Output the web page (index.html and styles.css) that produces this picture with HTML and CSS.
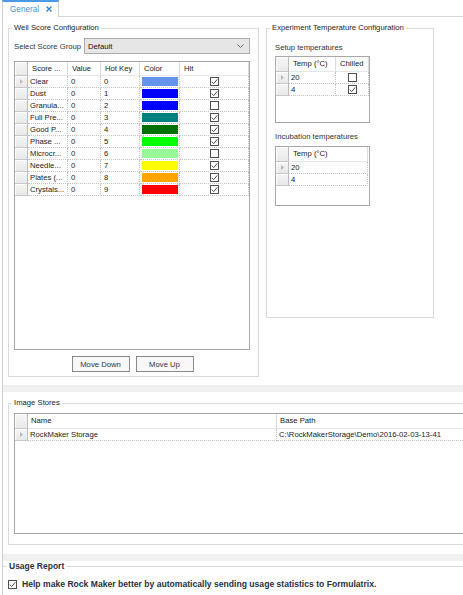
FILE: index.html
```html
<!DOCTYPE html>
<html>
<head>
<meta charset="utf-8">
<link rel="stylesheet" href="styles.css">
</head>
<body>
<div class="tabstrip">
  <div class="tab">
    <span class="tab-label">General</span>
    <svg class="tab-close" viewBox="0 0 6 6"><path d="M0.5 0.5 5.5 5.5 M5.5 0.5 0.5 5.5"/></svg>
  </div>
  <div class="tabfill"></div>
</div>
<div class="panel">
  <div class="top">
    <fieldset class="group well">
      <legend>Well Score Configuration</legend>
      <div class="select-row">
        <span class="select-label">Select Score Group</span>
        <div class="combo"><span>Default</span><svg class="chev" viewBox="0 0 7 4"><path d="M0.5 0.5 3.5 3.5 6.5 0.5"/></svg></div>
      </div>
      <div class="grid score-grid">
        <table>
          <colgroup><col class="c-rh"><col class="c-name"><col class="c-val"><col class="c-key"><col class="c-color"><col></colgroup>
          <thead><tr><th class="corner"></th><th>Score ...</th><th>Value</th><th>Hot Key</th><th>Color</th><th>Hit</th></tr></thead>
          <tbody>
            <tr><td class="rh"><svg class="cur" viewBox="0 0 3 5"><path d="M0 0 3 2.5 0 5z"/></svg></td><td>Clear</td><td>0</td><td>0</td><td><div class="sw" style="background:#6495ed"></div></td><td class="chk"><svg class="cb" viewBox="0 0 9 9"><rect x=".5" y=".5" width="8" height="8"/><path d="M1.8 4.6 3.7 6.6 7.2 2.4"/></svg></td></tr>
            <tr><td class="rh"></td><td>Dust</td><td>0</td><td>1</td><td><div class="sw" style="background:#0000ff"></div></td><td class="chk"><svg class="cb" viewBox="0 0 9 9"><rect x=".5" y=".5" width="8" height="8"/><path d="M1.8 4.6 3.7 6.6 7.2 2.4"/></svg></td></tr>
            <tr><td class="rh"></td><td>Granula...</td><td>0</td><td>2</td><td><div class="sw" style="background:#0000ff"></div></td><td class="chk"><svg class="cb" viewBox="0 0 9 9"><rect x=".5" y=".5" width="8" height="8"/></svg></td></tr>
            <tr><td class="rh"></td><td>Full Pre...</td><td>0</td><td>3</td><td><div class="sw" style="background:#008080"></div></td><td class="chk"><svg class="cb" viewBox="0 0 9 9"><rect x=".5" y=".5" width="8" height="8"/><path d="M1.8 4.6 3.7 6.6 7.2 2.4"/></svg></td></tr>
            <tr><td class="rh"></td><td>Good P...</td><td>0</td><td>4</td><td><div class="sw" style="background:#007000"></div></td><td class="chk"><svg class="cb" viewBox="0 0 9 9"><rect x=".5" y=".5" width="8" height="8"/><path d="M1.8 4.6 3.7 6.6 7.2 2.4"/></svg></td></tr>
            <tr><td class="rh"></td><td>Phase ...</td><td>0</td><td>5</td><td><div class="sw" style="background:#00ff00"></div></td><td class="chk"><svg class="cb" viewBox="0 0 9 9"><rect x=".5" y=".5" width="8" height="8"/><path d="M1.8 4.6 3.7 6.6 7.2 2.4"/></svg></td></tr>
            <tr><td class="rh"></td><td>Microcr...</td><td>0</td><td>6</td><td><div class="sw" style="background:#98fb98"></div></td><td class="chk"><svg class="cb" viewBox="0 0 9 9"><rect x=".5" y=".5" width="8" height="8"/></svg></td></tr>
            <tr><td class="rh"></td><td>Needle...</td><td>0</td><td>7</td><td><div class="sw" style="background:#ffff00"></div></td><td class="chk"><svg class="cb" viewBox="0 0 9 9"><rect x=".5" y=".5" width="8" height="8"/><path d="M1.8 4.6 3.7 6.6 7.2 2.4"/></svg></td></tr>
            <tr><td class="rh"></td><td>Plates (...</td><td>0</td><td>8</td><td><div class="sw" style="background:#ffa500"></div></td><td class="chk"><svg class="cb" viewBox="0 0 9 9"><rect x=".5" y=".5" width="8" height="8"/><path d="M1.8 4.6 3.7 6.6 7.2 2.4"/></svg></td></tr>
            <tr><td class="rh"></td><td>Crystals...</td><td>0</td><td>9</td><td><div class="sw" style="background:#ff0000"></div></td><td class="chk"><svg class="cb" viewBox="0 0 9 9"><rect x=".5" y=".5" width="8" height="8"/><path d="M1.8 4.6 3.7 6.6 7.2 2.4"/></svg></td></tr>
          </tbody>
        </table>
      </div>
      <div class="buttons">
        <button class="btn">Move Down</button>
        <button class="btn">Move Up</button>
      </div>
    </fieldset>

    <fieldset class="group temps">
      <legend>Experiment Temperature Configuration</legend>
      <div class="sub-label first">Setup temperatures</div>
      <div class="grid setup-grid">
        <table>
          <colgroup><col class="c-rh"><col class="c-temp"><col></colgroup>
          <thead><tr><th class="corner"></th><th>Temp (°C)</th><th>Chilled</th></tr></thead>
          <tbody>
            <tr><td class="rh"><svg class="cur" viewBox="0 0 3 5"><path d="M0 0 3 2.5 0 5z"/></svg></td><td>20</td><td class="chk"><svg class="cb" viewBox="0 0 9 9"><rect x=".5" y=".5" width="8" height="8"/></svg></td></tr>
            <tr><td class="rh"></td><td>4</td><td class="chk"><svg class="cb" viewBox="0 0 9 9"><rect x=".5" y=".5" width="8" height="8"/><path d="M1.8 4.6 3.7 6.6 7.2 2.4"/></svg></td></tr>
          </tbody>
        </table>
      </div>
      <div class="sub-label">Incubation temperatures</div>
      <div class="grid incub-grid">
        <table>
          <colgroup><col class="c-rh"><col></colgroup>
          <thead><tr><th class="corner"></th><th>Temp (°C)</th></tr></thead>
          <tbody>
            <tr><td class="rh"><svg class="cur" viewBox="0 0 3 5"><path d="M0 0 3 2.5 0 5z"/></svg></td><td>20</td></tr>
            <tr><td class="rh"></td><td>4</td></tr>
          </tbody>
        </table>
      </div>
    </fieldset>
  </div>

  <div class="band"></div>

  <div class="stores-section">
    <fieldset class="group stores">
      <legend>Image Stores</legend>
      <div class="grid stores-grid">
        <table>
          <colgroup><col class="c-rh"><col class="c-sname"><col></colgroup>
          <thead><tr><th class="corner"></th><th>Name</th><th>Base Path</th></tr></thead>
          <tbody>
            <tr><td class="rh"><svg class="cur" viewBox="0 0 3 5"><path d="M0 0 3 2.5 0 5z"/></svg></td><td>RockMaker Storage</td><td>C:\RockMakerStorage\Demo\2016-02-03-13-41</td></tr>
          </tbody>
        </table>
      </div>
    </fieldset>
  </div>

  <div class="band"></div>

  <fieldset class="usage">
    <legend>Usage Report</legend>
    <div class="check-row">
      <svg class="cb big" viewBox="0 0 9 9"><rect x=".5" y=".5" width="8" height="8"/><path d="M1.8 4.6 3.7 6.6 7.2 2.4"/></svg>
      <span>Help make Rock Maker better by automatically sending usage statistics to Formulatrix.</span>
    </div>
  </fieldset>
</div>
</body>
</html>
```

FILE: styles.css
```css
* { box-sizing: border-box; }
html, body { margin: 0; padding: 0; }
body {
  width: 463px;
  height: 595px;
  overflow: hidden;
  background: #fff;
  padding-left: 2px;
  font-family: "Liberation Sans", Arial, sans-serif;
  font-size: 7.7px;
  color: #262626;
}

/* tab strip */
.tabstrip { display: flex; height: 17px; }
.tab {
  width: 57px;
  height: 17px;
  border-left: 1px solid #cfcfcf;
  border-right: 1px solid #cfcfcf;
  border-top: 2px solid #4a9ae4;
  display: flex;
  align-items: center;
  padding-left: 7px;
  padding-bottom: 1px;
  color: #4a94dc;
  font-size: 8.2px;
}
.tab-label { width: 36px; }
.tab-close { width: 6px; height: 6px; }
.tab-close path { stroke: #2f86d8; stroke-width: 1.4; fill: none; }
.tabfill { flex: 1; border-bottom: 1px solid #d6d6d6; }

.panel { border-left: 1px solid #d0d0d0; height: 578px; }

.top { display: flex; align-items: flex-start; height: 368px; }

/* group boxes */
.group {
  margin: 0;
  border: 1px solid #dadada;
  min-width: 0;
}
.group legend {
  padding: 0 2px;
  height: 10px;
  line-height: 10px;
  color: #1e1e1e;
}

.well {
  margin: 6px 0 0 5px;
  width: 251px;
  padding: 5px 7px 4px 5px;
}
.well legend { margin-left: -2px; }

.select-row { display: flex; align-items: center; height: 16px; }
.select-label { width: 70px; color: #333; }
.combo {
  width: 166px;
  height: 16px;
  background: #e6e6e6;
  border: 1px solid #acacac;
  display: flex;
  align-items: center;
  justify-content: space-between;
  padding: 0 5px 0 3px;
  color: #111;
}
.chev { width: 7px; height: 4px; }
.chev path { fill: none; stroke: #666; stroke-width: 1; }

/* grids */
.grid {
  border: 1px solid #a8a8a8;
  background: #fff;
  overflow: hidden;
}
.grid table {
  border-collapse: separate;
  border-spacing: 0;
  table-layout: fixed;
}
.grid th {
  height: 14px;
  padding: 0 0 0 4px;
  text-align: left;
  font-weight: normal;
  color: #1a1a1a;
  background: #fff;
  border-right: 1px solid #dcdcdc;
  border-bottom: 1px solid #e6e6e6;
  white-space: nowrap;
  overflow: hidden;
  line-height: 13px;
}
.grid th.corner {
  background: linear-gradient(#f7f7f7, #e9e9e9);
  border-right: 1px solid #bdbdbd;
  border-bottom: 1px solid #c6c6c6;
  box-shadow: inset 1px 1px #fff;
  padding: 0;
}
.grid td {
  height: 12px;
  padding: 0 0 0 3px;
  line-height: 11px;
  border-right: 1px dotted #c4c4c4;
  border-bottom: 1px dotted #c4c4c4;
  white-space: nowrap;
  overflow: hidden;
  color: #1a1a1a;
}
.grid td.rh {
  padding: 0;
  background: linear-gradient(#f6f6f6, #e8e8e8);
  border-right: 1px solid #bcbcbc;
  border-bottom: 1px solid #c8c8c8;
  box-shadow: inset 1px 1px #fff;
  text-align: center;
}
.cur { display: block; width: 3px; height: 5px; margin: 0 auto; }
.cur path { fill: #b8b8b8; }
.grid td.chk { text-align: center; padding: 0; }

.cb { display: inline-block; width: 9px; height: 9px; vertical-align: middle; }
.cb rect { fill: #fff; stroke: #505050; stroke-width: 1; }
.cb path { fill: none; stroke: #4a4a4a; stroke-width: 1; }

.sw { height: 9px; margin: 0 1px 0 -1px; }

.score-grid { width: 236px; height: 289px; margin-top: 7px; }
.score-grid table { width: 234px; }
.score-grid .c-rh { width: 13px; }
.score-grid .c-name { width: 40px; }
.score-grid .c-val { width: 33px; }
.score-grid .c-key { width: 39px; }
.score-grid .c-color { width: 40px; }
.score-grid td:nth-child(2) { padding-left: 2px; }

.buttons { display: flex; justify-content: center; gap: 6px; margin-top: 6px; }
.btn {
  width: 58px;
  height: 16px;
  margin: 0;
  padding: 0;
  background: #f8f8f8;
  border: 1px solid #8a8a8a;
  border-radius: 0;
  font-family: inherit;
  font-size: 7.7px;
  color: #333;
}

/* temperatures */
.temps {
  margin: 6px 0 0 7px;
  width: 168px;
  padding: 0 8px 111px 8px;
}
.temps legend { margin-left: -5px; }
.sub-label { height: 10px; line-height: 10px; margin: 9px 0 4px; color: #333; }
.sub-label.first { margin-top: 10px; margin-bottom: 3px; }
.setup-grid { width: 95px; height: 67px; }
.setup-grid table { width: 93px; }
.setup-grid .c-rh { width: 13px; }
.setup-grid .c-temp { width: 47px; }
.setup-grid th, .incub-grid th { height: 15px; line-height: 14px; }
.incub-grid { width: 95px; height: 60px; }
.incub-grid table { width: 92px; }
.incub-grid .c-rh { width: 13px; }
.temps td:nth-child(2) { padding-left: 2px; }

.band { height: 7px; background: #f0f0f0; }

/* image stores */
.stores-section { height: 156px; }
.stores {
  margin: 6px 0 0 5px;
  width: 480px;
  padding: 5px 0 10px 5px;
}
.stores legend { margin-left: -2px; }
.stores-grid { width: 480px; height: 121px; border-right: none; }
.stores-grid table { width: 480px; }
.stores-grid .c-rh { width: 13px; }
.stores-grid .c-sname { width: 249px; }
.stores-grid th { height: 15px; line-height: 14px; padding-left: 3px; }
.stores-grid td { padding-left: 2px; }

/* usage */
.usage {
  margin: 0;
  padding: 8px 0 0 0;
  border: none;
  border-top: 1px solid #dadada;
  min-width: 0;
}
.usage legend {
  margin-left: 4px;
  padding: 0 2px;
  height: 10px;
  line-height: 10px;
  font-weight: bold;
  font-size: 8.5px;
  color: #2a3040;
}
.check-row {
  display: flex;
  align-items: center;
  gap: 5px;
  padding-left: 5px;
  height: 10px;
  font-weight: bold;
  font-size: 8.6px;
  color: #2a3040;
}
```
